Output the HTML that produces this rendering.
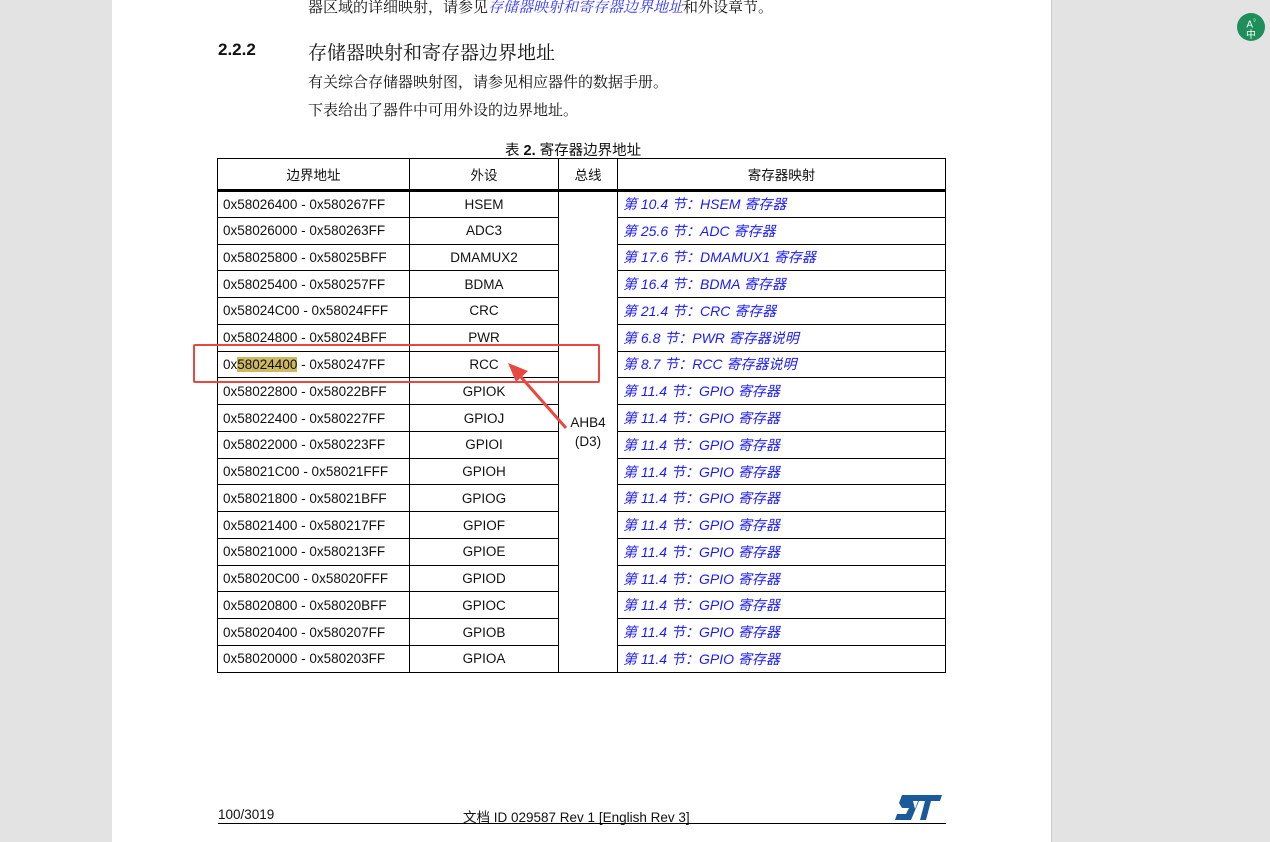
<!DOCTYPE html>
<html><head><meta charset="utf-8"><style>
body{margin:0;width:1270px;height:842px;background:#e3e3e3;position:relative;overflow:hidden;font-family:"Liberation Sans","Noto Sans CJK SC",sans-serif;color:#111}
.page{position:absolute;left:112px;top:0;width:939px;height:842px;background:#fff;border-right:1px solid #ccc}
.a{position:absolute;white-space:nowrap}
.s{font-family:"Liberation Serif","Noto Serif CJK SC",serif}
table{position:absolute;left:217px;top:158px;border-collapse:collapse;table-layout:fixed;font-size:13.5px}
td,th{border:1px solid #000;padding:0 5px;height:26.78px;box-sizing:border-box;font-weight:normal}
th{height:32px;border-bottom:3px solid #000}
td.c{text-align:center}
td.l{color:#1a1aff;font-style:italic;font-size:14px}
.hl{background:#cdb95f}
</style></head><body>
<div class="page"></div>
<div class="a s" style="left:308px;top:-4px;font-size:15px">器区域的详细映射，请参见<span style="color:#3333ff;font-style:italic">存储器映射和寄存器边界地址</span>和外设章节。</div>
<div class="a" style="left:218px;top:40px;font-size:17px;font-weight:bold">2.2.2</div>
<div class="a s" style="left:308px;top:38px;font-size:19px">存储器映射和寄存器边界地址</div>
<div class="a s" style="left:308px;top:71px;font-size:15px">有关综合存储器映射图，请参见相应器件的数据手册。</div>
<div class="a s" style="left:308px;top:99px;font-size:15px">下表给出了器件中可用外设的边界地址。</div>
<div class="a" style="left:505px;top:139px;font-size:14.5px">表 <b>2.</b> 寄存器边界地址</div>
<table>
<colgroup><col style="width:192px"><col style="width:149px"><col style="width:59px"><col style="width:328px"></colgroup>
<tr><th>边界地址</th><th>外设</th><th>总线</th><th>寄存器映射</th></tr>
<tr><td>0x58026400 - 0x580267FF</td><td class="c">HSEM</td><td class="c" rowspan="18" style="line-height:19px;padding:0">AHB4<br>(D3)</td><td class="l">第 10.4 节：HSEM 寄存器</td></tr>
<tr><td>0x58026000 - 0x580263FF</td><td class="c">ADC3</td><td class="l">第 25.6 节：ADC 寄存器</td></tr>
<tr><td>0x58025800 - 0x58025BFF</td><td class="c">DMAMUX2</td><td class="l">第 17.6 节：DMAMUX1 寄存器</td></tr>
<tr><td>0x58025400 - 0x580257FF</td><td class="c">BDMA</td><td class="l">第 16.4 节：BDMA 寄存器</td></tr>
<tr><td>0x58024C00 - 0x58024FFF</td><td class="c">CRC</td><td class="l">第 21.4 节：CRC 寄存器</td></tr>
<tr><td>0x58024800 - 0x58024BFF</td><td class="c">PWR</td><td class="l">第 6.8 节：PWR 寄存器说明</td></tr>
<tr><td>0x<span class="hl">58024400</span> - 0x580247FF</td><td class="c">RCC</td><td class="l">第 8.7 节：RCC 寄存器说明</td></tr>
<tr><td>0x58022800 - 0x58022BFF</td><td class="c">GPIOK</td><td class="l">第 11.4 节：GPIO 寄存器</td></tr>
<tr><td>0x58022400 - 0x580227FF</td><td class="c">GPIOJ</td><td class="l">第 11.4 节：GPIO 寄存器</td></tr>
<tr><td>0x58022000 - 0x580223FF</td><td class="c">GPIOI</td><td class="l">第 11.4 节：GPIO 寄存器</td></tr>
<tr><td>0x58021C00 - 0x58021FFF</td><td class="c">GPIOH</td><td class="l">第 11.4 节：GPIO 寄存器</td></tr>
<tr><td>0x58021800 - 0x58021BFF</td><td class="c">GPIOG</td><td class="l">第 11.4 节：GPIO 寄存器</td></tr>
<tr><td>0x58021400 - 0x580217FF</td><td class="c">GPIOF</td><td class="l">第 11.4 节：GPIO 寄存器</td></tr>
<tr><td>0x58021000 - 0x580213FF</td><td class="c">GPIOE</td><td class="l">第 11.4 节：GPIO 寄存器</td></tr>
<tr><td>0x58020C00 - 0x58020FFF</td><td class="c">GPIOD</td><td class="l">第 11.4 节：GPIO 寄存器</td></tr>
<tr><td>0x58020800 - 0x58020BFF</td><td class="c">GPIOC</td><td class="l">第 11.4 节：GPIO 寄存器</td></tr>
<tr><td>0x58020400 - 0x580207FF</td><td class="c">GPIOB</td><td class="l">第 11.4 节：GPIO 寄存器</td></tr>
<tr><td>0x58020000 - 0x580203FF</td><td class="c">GPIOA</td><td class="l">第 11.4 节：GPIO 寄存器</td></tr>
</table>
<div class="a" style="left:193px;top:344px;width:403px;height:35px;border:2.5px solid #e8483f;border-radius:2px"></div>
<svg class="a" style="left:0;top:0" width="1270" height="842"><line x1="566" y1="428" x2="520" y2="376" stroke="#e8483f" stroke-width="3"/><polygon points="508,363 528,371 516,382" fill="#e8483f"/></svg>
<div class="a" style="left:218px;top:807px;font-size:13.5px">100/3019</div>
<div class="a" style="left:463px;top:806px;font-size:13.5px">文档 ID 029587 Rev 1 [English Rev 3]</div>
<div class="a" style="left:218px;top:823px;width:728px;height:1px;background:#000"></div>
<svg class="a" style="left:895px;top:795px" width="48" height="26" viewBox="0 0 48 26"><path d="M7 0H47L45 6H36L31 25H25L30 6H24L16 25H0L2 19H11L14 13H7L4 8Z" fill="#1a5a9a"/><path d="M18 6H23L20 14Z" fill="#fff"/></svg>
<div class="a" style="left:1237px;top:13px;width:28px;height:28px;border-radius:50%;background:#1e8e5a;color:#fff;font-size:10px;line-height:11px;text-align:center;padding-top:3px;box-sizing:border-box">A<sup style="font-size:7px">ᵓ</sup><br>中</div>
</body></html>
